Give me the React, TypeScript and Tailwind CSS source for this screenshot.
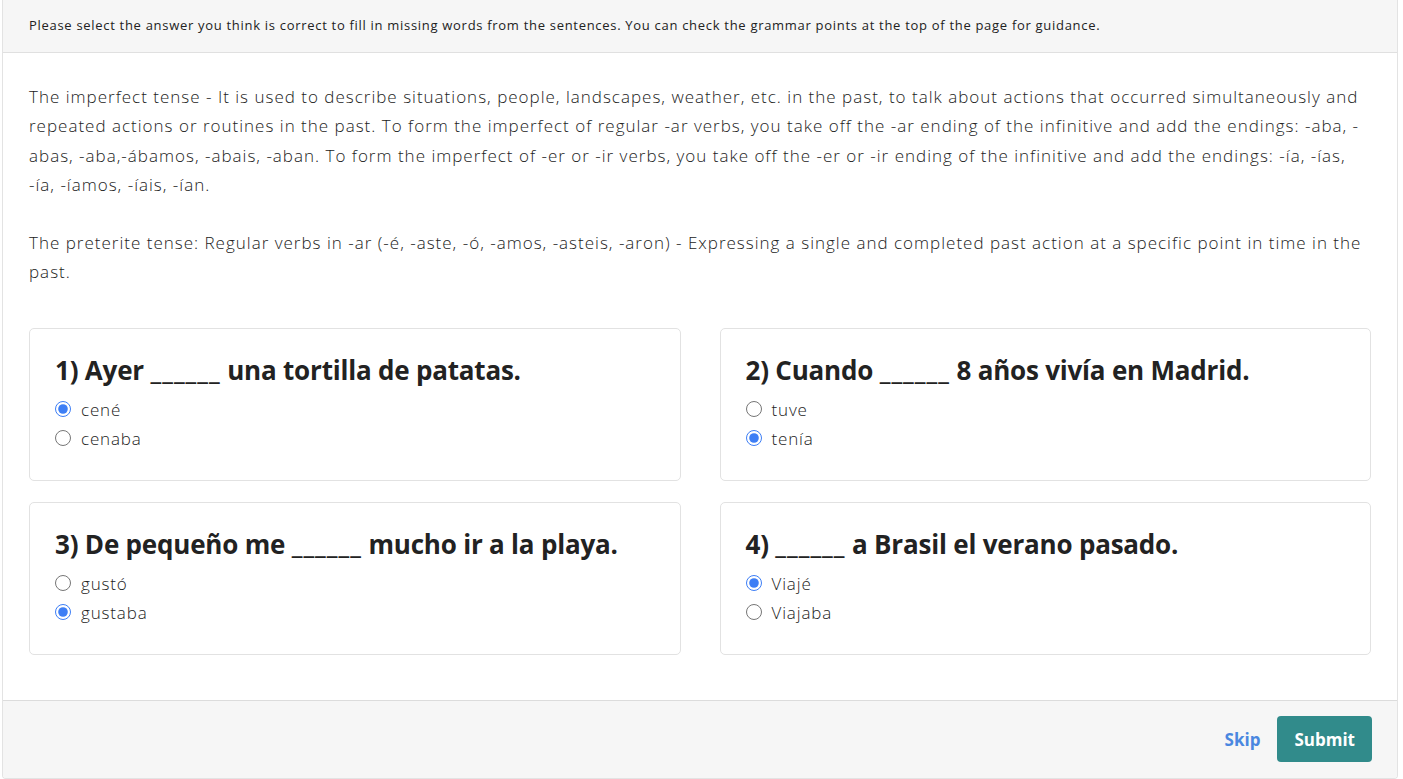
import { useState } from "react";

type Question = { id: number; text: [string, string]; options: string[]; picked: number };

const QUESTIONS: Question[] = [
  { id: 1, text: ["Ayer", "una tortilla de patatas."], options: ["cené", "cenaba"], picked: 0 },
  { id: 2, text: ["Cuando", "8 años vivía en Madrid."], options: ["tuve", "tenía"], picked: 1 },
  { id: 3, text: ["De pequeño me", "mucho ir a la playa."], options: ["gustó", "gustaba"], picked: 1 },
  { id: 4, text: ["", "a Brasil el verano pasado."], options: ["Viajé", "Viajaba"], picked: 0 },
];

function QuestionCard({ q }: { q: Question }) {
  const [value, setValue] = useState(q.picked);
  return (
    <div className="rounded-[5px] border border-[#e2e2e2] bg-white px-[25px] pt-[24px] pb-[27px]">
      <h3 className="text-[26px] leading-[34px] font-bold tracking-[-0.2px] text-[#222]">
        {q.id}) {q.text[0] && `${q.text[0]} `}
        <span className="tracking-[1px]">______</span> {q.text[1]}
      </h3>
      <div className="mt-[8px] flex flex-col">
        {q.options.map((opt, i) => (
          <label key={opt} className="flex h-[29px] items-center gap-[10px] text-[17px] font-light tracking-[0.85px] text-[#222]">
            <input
              type="radio"
              name={`q${q.id}`}
              checked={value === i}
              onChange={() => setValue(i)}
              className="m-0 h-4 w-4 accent-[#3d7ef5]"
            />
            {opt}
          </label>
        ))}
      </div>
    </div>
  );
}

export default function App() {
  return (
    <div className="min-h-screen bg-white font-['Open_Sans',_'Noto_Sans',_sans-serif]">
      <div className="mx-[2px] w-[1396px] overflow-hidden rounded-b-[4px] border border-t-0 border-[#e3e3e3]">
        <div className="flex h-[53px] items-center border-b border-[#e0e0e0] bg-[#f6f6f6] px-[26px] text-[13px] tracking-[0.7px] text-[#222]">
          Please select the answer you think is correct to fill in missing words from the sentences. You can check the grammar points at the top of the page for guidance.
        </div>

        <div className="bg-white px-[26px] pt-[29px] pb-[45px]">
          <div className="text-[17px] leading-[29.3px] font-light tracking-[1px] text-[#222]">
            <p>
              The imperfect tense - It is used to describe situations, people, landscapes, weather, etc. in the past, to talk about actions that occurred simultaneously and repeated actions or routines in the past. To form the imperfect of regular -ar verbs, you take off the -ar ending of the infinitive and add the endings: -aba, -abas, -aba,-ábamos, -abais, -aban. To form the imperfect of -er or -ir verbs, you take off the -er or -ir ending of the infinitive and add the endings: -ía, -ías, -ía, -íamos, -íais, -ían.
            </p>
            <p className="mt-[29px]">
              The preterite tense: Regular verbs in -ar (-é, -aste, -ó, -amos, -asteis, -aron) - Expressing a single and completed past action at a specific point in time in the past.
            </p>
          </div>

          <div className="mt-[41px] grid grid-cols-2 gap-x-[39px] gap-y-[21px]">
            {QUESTIONS.map((q) => (
              <QuestionCard key={q.id} q={q} />
            ))}
          </div>
        </div>

        <div className="flex h-[78px] items-center justify-end gap-[17px] border-t border-[#dcdcdc] bg-[#f6f6f6] pr-[25px]">
          <button className="text-[17px] font-bold text-[#4a87e0]">Skip</button>
          <button className="h-[46px] rounded-[4px] bg-[#318b8b] px-[17px] text-[17px] font-bold text-white">
            Submit
          </button>
        </div>
      </div>
    </div>
  );
}
